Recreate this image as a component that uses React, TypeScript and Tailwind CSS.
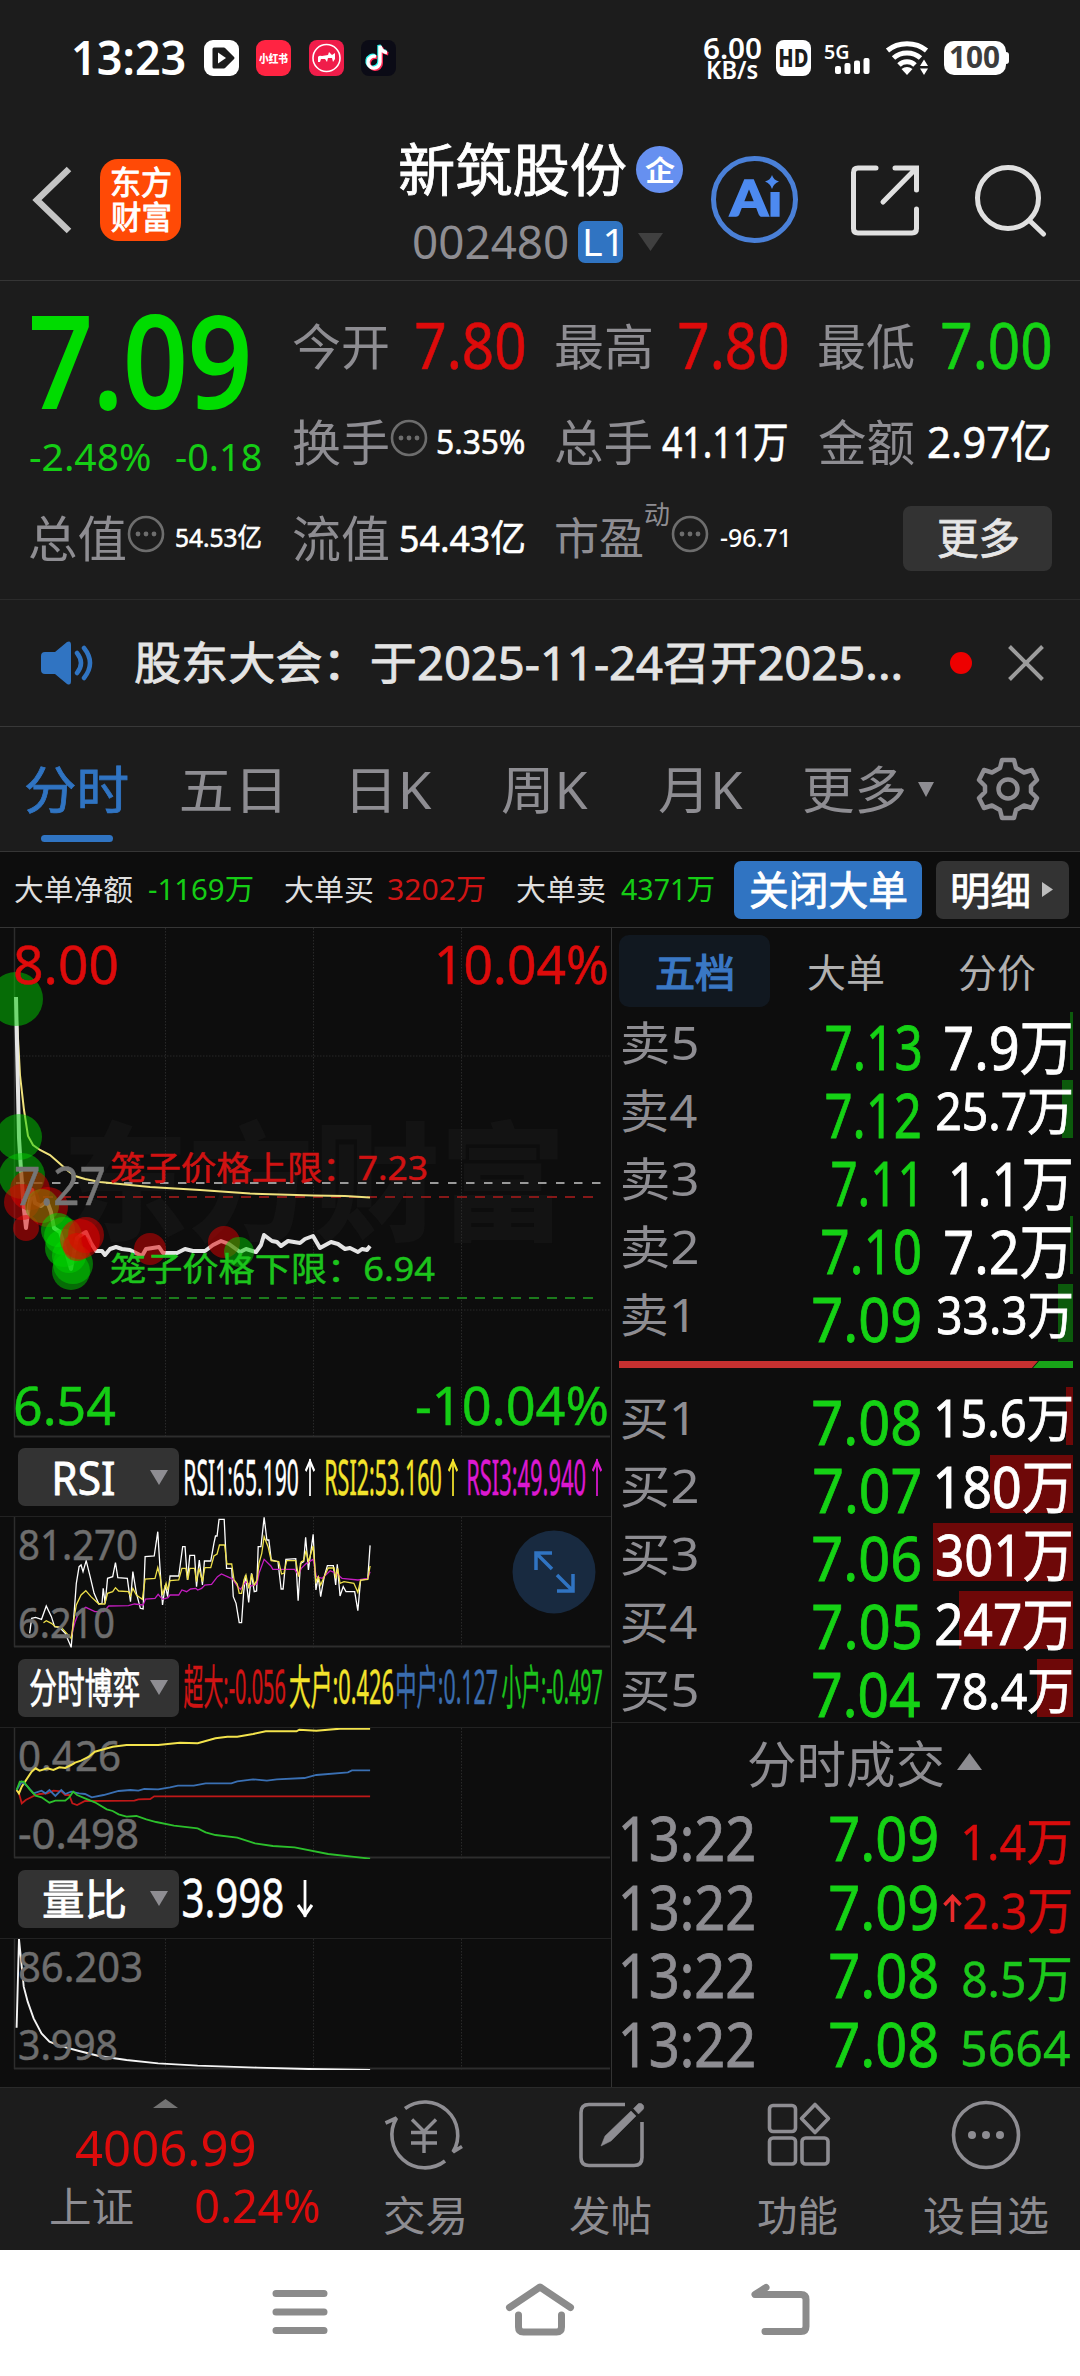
import { useLayoutEffect, useRef, type ReactNode } from "react";

/* Text squeezed or stretched so that its ink fills the width of its box. */
function Fit({ children, className = "" }: { children: string; className?: string }) {
  const box = useRef<HTMLSpanElement>(null);
  const ink = useRef<HTMLSpanElement>(null);
  useLayoutEffect(() => {
    if (!box.current || !ink.current) return;
    const cs = getComputedStyle(box.current);
    const ctx = document.createElement("canvas").getContext("2d");
    if (!ctx) return;
    ctx.font = `${cs.fontWeight} ${cs.fontSize} ${cs.fontFamily}`;
    const m = ctx.measureText(children);
    const width = m.actualBoundingBoxLeft + m.actualBoundingBoxRight;
    const k = box.current.offsetWidth / width;
    const lift = /\d/.test(children) ? -0.03 * parseFloat(cs.fontSize) : 0;
    ink.current.style.transform = `translate(${m.actualBoundingBoxLeft * k}px, ${lift}px) scaleX(${k})`;
  }, [children]);
  return (
    <span ref={box} className={`inline-block shrink-0 whitespace-nowrap leading-none ${className}`}>
      <span ref={ink} className="inline-block origin-left">
        {children}
      </span>
    </span>
  );
}

function StatusBar() {
  return (
    <div className="flex h-[116px] items-center pl-[74px] text-white">
      <Fit className="w-[111px] text-[46px] font-semibold">13:23</Fit>
      <svg className="ml-[19px] h-9 w-[35px]" viewBox="0 0 35 36">
        <rect width="35" height="36" rx="9" fill="#fff" />
        <path d="M10 9h10l9 9-9 9H10z" fill="#1c1c1c" stroke="#1c1c1c" strokeWidth="3" strokeLinejoin="round" />
        <path d="M14 12.500v11l8-5.500z" fill="#fff" />
      </svg>
      <div className="ml-[17px] flex h-9 w-[35px] items-center justify-center rounded-[9px] bg-[#ff2442]">
        <Fit className="w-[29px] text-[11px] font-black">小红书</Fit>
      </div>
      <svg className="ml-[18px] h-9 w-[35px]" viewBox="0 0 35 36">
        <rect width="35" height="36" rx="8" fill="#f01d4a" />
        <circle cx="17.500" cy="18" r="13.500" fill="none" stroke="#fff" strokeWidth="1.600" />
        <path d="M9 22v-5q1-2 4-1l6-1 1-3 3 3 3-2v6l-2 3-1-4h-4l-1 4-2-3h-4l-1 3z" fill="#fff" />
      </svg>
      <svg className="ml-[17px] h-9 w-[35px]" viewBox="0 0 35 36">
        <rect width="35" height="36" rx="8" fill="#0b0b16" />
        <g fill="none" strokeWidth="3.400">
          <path d="M15 16.500a6 6 0 1 0 4 5.600V6c1 4 3 6 7 6.500" stroke="#25f4ee" transform="translate(-1 -1)" />
          <path d="M15 16.500a6 6 0 1 0 4 5.600V6c1 4 3 6 7 6.500" stroke="#fe2c55" transform="translate(1.300 1.200)" />
          <path d="M15 16.500a6 6 0 1 0 4 5.600V6c1 4 3 6 7 6.500" stroke="#fff" />
        </g>
      </svg>
      <div className="ml-[308px] flex flex-col items-center">
        <Fit className="w-[57px] text-[28px] font-semibold">6.00</Fit>
        <Fit className="-mt-[6px] w-[50px] text-[25px] font-semibold">KB/s</Fit>
      </div>
      <div className="ml-[15px] flex h-9 w-[35px] items-center justify-center rounded-lg bg-white text-[#1c1c1c]">
        <Fit className="w-[28px] text-[24px] font-extrabold">HD</Fit>
      </div>
      <div className="ml-[14px] flex w-[45px] flex-col">
        <Fit className="h-4 w-[23px] text-[20px] font-semibold">5G</Fit>
        <svg className="-mt-[1px] ml-[9px] h-4 w-[37px]" viewBox="0 0 37 16" fill="#fff">
          <rect x="1" y="8" width="6" height="8" rx="2" />
          <rect x="10.500" y="5" width="6" height="11" rx="2" />
          <rect x="20" y="2.500" width="6" height="13.500" rx="2" />
          <rect x="29.500" y="0" width="6" height="16" rx="2" />
        </svg>
      </div>
      <svg className="ml-[15px] h-9 w-[46px]" viewBox="0 0 46 36" fill="none" stroke="#fff" strokeWidth="5">
        <path d="M2.500 10.500a28 24 0 0 1 39 0" />
        <path d="M8.500 18a19 17 0 0 1 27 0" />
        <path d="M14 25a11 10 0 0 1 16 0" />
        <path d="M16.500 29q5.500-4 11 0l-5.500 6z" fill="#fff" stroke="none" />
        <path d="M35 26l4-6.500 4 6.500zM35 28.500l4 6.500 4-6.500z" fill="#fff" stroke="none" />
      </svg>
      <div className="ml-[13px] flex h-[34px] w-[62px] items-center justify-center rounded-[10px] bg-white text-[#3c3c3c]">
        <Fit className="w-[50px] text-[30px] font-bold">100</Fit>
      </div>
      <div className="h-3 w-[3px] rounded-r bg-white" />
    </div>
  );
}

function Header() {
  return (
    <header className="flex h-[165px] items-center border-b border-[#353535] pt-[3px] pl-[32px]">
      <svg className="h-[68px] w-[40px]" viewBox="0 0 40 68" fill="none" stroke="#c4c4c4" strokeWidth="6.500">
        <path d="M37 3L5 34l32 31" />
      </svg>
      <div className="ml-[28px] flex h-[82px] w-[81px] flex-col items-center justify-center gap-[3px] rounded-[18px] bg-[#ff4a06] text-white">
        <Fit className="w-[58px] text-[32px] [-webkit-text-stroke:1px]">东方</Fit>
        <Fit className="w-[58px] text-[32px] [-webkit-text-stroke:1px]">财富</Fit>
      </div>
      <div className="ml-[219px] flex w-[283px] flex-col pt-[3px]">
        <div className="flex h-[60px] items-center">
          <Fit className="w-[226px] text-[57px] text-white [-webkit-text-stroke:0.8px]">新筑股份</Fit>
          <div className="ml-[10px] flex h-[47px] w-[47px] items-center justify-center rounded-full bg-[#6690f0] text-white">
            <Fit className="w-[30px] text-[28px] font-bold">企</Fit>
          </div>
        </div>
        <div className="mt-[21px] flex h-[42px] items-center pl-[14px]">
          <Fit className="w-[154px] text-[46px] text-[#8e8d92]">002480</Fit>
          <div className="ml-[10px] flex h-[42px] w-[45px] items-center justify-center rounded-[7px] bg-[#3074c2] text-white">
            <Fit className="w-[32px] text-[38px]">L1</Fit>
          </div>
          <svg className="ml-[14px] h-[18px] w-[27px]" viewBox="0 0 27 18">
            <path d="M1 0h25L13.500 18z" fill="#404040" />
          </svg>
        </div>
      </div>
      <div className="relative ml-[28px] flex h-[87px] w-[87px] items-center justify-center rounded-full border-[5px] border-[#4a80d8] text-[#4d8af0]">
        <Fit className="w-[51px] -translate-y-[3px] font-['Lato'] text-[50px] font-black [-webkit-text-stroke:1.5px]">Ai</Fit>
        <svg className="absolute top-[13px] left-[46px] h-[18px] w-[19px] bg-[#1c1c1c]" viewBox="0 0 19 18">
          <path d="M10 1q1.500 5 7 6.500-5.500 2-7 7.500-1.500-5.500-7-7.500Q8.500 6 10 1z" fill="#4d8af0" />
        </svg>
      </div>
      <svg className="ml-[50px] h-[72px] w-[74px]" viewBox="0 0 74 72" fill="none" stroke="#e0e0e0" strokeWidth="5" strokeLinecap="round">
        <path d="M28 4H10q-4.500 0-4.500 4.500v56q0 4.500 4.500 4.500h54q4.500 0 4.500-4.500V45" />
        <path d="M47 4h21.500v22M67 5.500L35 38" />
      </svg>
      <svg className="ml-[49px] h-[74px] w-[76px]" viewBox="0 0 76 74" fill="none" stroke="#e0e0e0" strokeWidth="5" strokeLinecap="round">
        <circle cx="37" cy="35" r="30.500" />
        <path d="M59 58l13.500 13" />
      </svg>
    </header>
  );
}

function Dots() {
  return (
    <svg className="mx-[2px] h-[38px] w-[38px] shrink-0 -translate-y-[4px]" viewBox="0 0 38 38">
      <circle cx="19" cy="19" r="17" fill="none" stroke="#6d6d6d" strokeWidth="2.600" />
      <g fill="#6d6d6d">
        <circle cx="11" cy="19" r="2.400" />
        <circle cx="19" cy="19" r="2.400" />
        <circle cx="27" cy="19" r="2.400" />
      </g>
    </svg>
  );
}

function Stat({ label, dots, children }: { label: string; dots?: boolean; children: ReactNode }) {
  return (
    <div className="flex items-center">
      <Fit className="w-[95px] text-[49px] text-[#8e8d92]">{label}</Fit>
      {dots && <Dots />}
      <span className="ml-auto flex [-webkit-text-stroke:0.6px]">{children}</span>
    </div>
  );
}

function Quote() {
  return (
    <section className="grid h-[319px] grid-cols-4 grid-rows-[96px_96px_96px] gap-x-8 border-b border-[#2b2b2b] px-[30px] pt-[17px]">
      <div className="row-span-2 flex flex-col">
        <Fit className="mt-[1px] ml-[2px] w-[215px] text-[127px] font-medium text-[#00dc00] [-webkit-text-stroke:2px]">7.09</Fit>
        <div className="mt-[11px] flex justify-between text-[#15cd15]">
          <Fit className="w-[120px] text-[39px]">-2.48%</Fit>
          <Fit className="w-[85px] text-[39px]">-0.18</Fit>
        </div>
      </div>
      <Stat label="今开"><Fit className="w-[108px] text-[63px] text-[#dd0b0b]">7.80</Fit></Stat>
      <Stat label="最高"><Fit className="w-[108px] text-[63px] text-[#dd0b0b]">7.80</Fit></Stat>
      <Stat label="最低"><Fit className="w-[108px] text-[63px] text-[#15d215]">7.00</Fit></Stat>
      <Stat label="换手" dots><Fit className="w-[86px] text-[33px] text-white">5.35%</Fit></Stat>
      <Stat label="总手"><Fit className="w-[125px] text-[43px] text-white">41.11万</Fit></Stat>
      <Stat label="金额"><Fit className="w-[121px] text-[44px] text-white">2.97亿</Fit></Stat>
      <Stat label="总值" dots><Fit className="w-[85px] text-[26px] text-white">54.53亿</Fit></Stat>
      <Stat label="流值"><Fit className="w-[123px] text-[37px] text-white">54.43亿</Fit></Stat>
      <div className="flex items-center">
        <Fit className="w-[87px] text-[44px] text-[#8e8d92]">市盈</Fit>
        <Fit className="ml-[2px] w-[24px] -translate-y-[24px] text-[26px] text-[#8e8d92]">动</Fit>
        <Dots />
        <Fit className="ml-auto w-[67px] text-[26px] font-medium text-white">-96.71</Fit>
      </div>
      <div className="-mr-[2px] flex items-center justify-end">
        <div className="flex h-[65px] w-[149px] items-center justify-center rounded-[8px] bg-[#333]">
          <Fit className="w-[80px] text-[42px] text-[#e6e6e6] [-webkit-text-stroke:0.8px]">更多</Fit>
        </div>
      </div>
    </section>
  );
}

function Notice() {
  return (
    <section className="flex h-[127px] items-center border-b border-[#383838] pl-[41px]">
      <svg className="h-[44px] w-[54px]" viewBox="0 0 54 44">
        <path d="M4 11h10L26 1q4-2 4 3v36q0 5-4 3L14 33H4q-4 0-4-4V15q0-4 4-4z" fill="#3074c2" />
        <path d="M36 12q8 10 0 20M43 7q12 15 0 30" fill="none" stroke="#3074c2" strokeWidth="4.500" strokeLinecap="round" />
      </svg>
      <Fit className="ml-[40px] w-[765px] text-[45px] text-[#e4e4e4] [-webkit-text-stroke:0.8px]">股东大会：于2025-11-24召开2025...</Fit>
      <div className="ml-[50px] h-[22px] w-[22px] rounded-full bg-[#ee0000]" />
      <svg className="ml-[36px] h-9 w-9" viewBox="0 0 36 36" stroke="#9c9c9c" strokeWidth="4">
        <path d="M1.500 1.500l33 33M34.500 1.500l-33 33" />
      </svg>
    </section>
  );
}

function Tabs() {
  return (
    <nav className="flex h-[125px] items-center border-b border-[#353535] pl-[26px] text-[51px] text-[#8e8d92]">
      <div className="relative flex h-full w-[102px] items-center">
        <Fit className="w-[102px] text-[#3074c2] [-webkit-text-stroke:0.8px]">分时</Fit>
        <div className="absolute bottom-[9px] left-[15px] h-[7px] w-[72px] rounded-full bg-[#3074c2]" />
      </div>
      <Fit className="ml-[53px] w-[99px]">五日</Fit>
      <Fit className="ml-[72px] w-[80px]">日K</Fit>
      <Fit className="ml-[70px] w-[86px]">周K</Fit>
      <Fit className="ml-[71px] w-[84px]">月K</Fit>
      <Fit className="ml-[61px] w-[101px]">更多</Fit>
      <svg className="ml-[13px] h-[15px] w-[16px]" viewBox="0 0 16 15">
        <path d="M0 0h16L8 15z" fill="#8e8d92" />
      </svg>
      <svg className="ml-[42px] h-[64px] w-[64px]" viewBox="0 0 64 64" fill="none" stroke="#8e8d92" strokeWidth="4.500">
        <path d="M26 3h12l2 8 8 4.500 8-2.500 5 10-6 6v6l6 6-5 10-8-2.500-8 4.500-2 8H26l-2-8-8-4.500L8 51 3 41l6-6v-6l-6-6 5-10 8 2.500 8-4.500z" strokeLinejoin="round" />
        <circle cx="32" cy="32" r="9.500" />
      </svg>
    </nav>
  );
}

function BigOrders() {
  return (
    <section className="flex h-[76px] items-center border-b border-[#353535] bg-[#0d0d0d] pl-[15px] text-[29px] text-[#dedede]">
      <Fit className="w-[118px]">大单净额</Fit>
      <Fit className="ml-[16px] w-[104px] text-[#15cd15]">-1169万</Fit>
      <Fit className="ml-[32px] w-[88px]">大单买</Fit>
      <Fit className="ml-[15px] w-[97px] text-[#d01414]">3202万</Fit>
      <Fit className="ml-[32px] w-[88px]">大单卖</Fit>
      <Fit className="ml-[16px] w-[93px] text-[#15cd15]">4371万</Fit>
      <div className="ml-[20px] flex h-[58px] w-[188px] items-center justify-center rounded-[7px] bg-[#3074c2]">
        <Fit className="w-[156px] text-[40px] text-white [-webkit-text-stroke:0.8px]">关闭大单</Fit>
      </div>
      <div className="ml-[14px] flex h-[58px] w-[133px] items-center rounded-[7px] bg-[#333] pl-[17px]">
        <Fit className="w-[76px] text-[39px] text-white [-webkit-text-stroke:0.8px]">明细</Fit>
        <svg className="ml-[13px] h-[15px] w-[11px]" viewBox="0 0 11 15">
          <path d="M0 0v15l11-7.500z" fill="#bdbdbd" />
        </svg>
      </div>
    </section>
  );
}

function Label({ x, y, w, size, fill, children }: { x: number; y: number; w: number; size: number; fill: string; children: string }) {
  return (
    <text x={x} y={y} fontSize={size} fill={fill} stroke={fill} strokeWidth="0.5" textLength={w} lengthAdjust="spacingAndGlyphs">
      {children}
    </text>
  );
}

function Frame({ h }: { h: number }) {
  return (
    <g fill="none" stroke="#2d2d2d">
      <path d={`M165.500 0V${h}M313.500 0V${h}M461.500 0V${h}`} strokeDasharray="1.500 1.500" stroke="#292929" />
      <path d={`M14.500 0V${h - 1}`} strokeWidth="1.500" />
      <path d={`M14 ${h - 1.500}H610`} strokeWidth="2" />
    </g>
  );
}

const bubbles: [number, number, number, string][] = [
  [16, 999, 27, "#00cc00"],
  [19, 1137, 23, "#00cc00"],
  [22, 1176, 23, "#00cc00"],
  [30, 1190, 20, "#e00000"],
  [22, 1202, 18, "#e00000"],
  [26, 1228, 13, "#e00000"],
  [48, 1207, 20, "#e00000"],
  [42, 1206, 17, "#6c9000"],
  [58, 1230, 17, "#00dd00"],
  [63, 1236, 19, "#00dd00"],
  [64, 1248, 19, "#00dd00"],
  [69, 1256, 17, "#00dd00"],
  [73, 1264, 20, "#00cc00"],
  [71, 1271, 19, "#00cc00"],
  [80, 1239, 20, "#e80000"],
  [86, 1235, 18, "#e80000"],
  [77, 1247, 14, "#e80000"],
  [150, 1249, 16, "#e00000"],
  [224, 1242, 16, "#e00000"],
  [239, 1252, 15, "#00cc00"],
];

function PriceChart() {
  return (
    <svg className="block h-[510px] w-[611px]" viewBox="0 928 611 510">
      <text x="62" y="1231" fontSize="128" fontWeight="900" fill="#131313" textLength="504" lengthAdjust="spacingAndGlyphs">
        东方财富
      </text>
      <g transform="translate(0 928)">
        <Frame h={510} />
      </g>
      <path d="M14 1056H610M14 1310H610" stroke="#292929" strokeDasharray="1.500 1.500" fill="none" />
      <path d="M16 1183H606" stroke="#999" strokeWidth="2" strokeDasharray="8.500 9.500" />
      <path d="M25 1197H594" stroke="#861818" strokeWidth="2" strokeDasharray="10 8" />
      <path d="M25 1298H594" stroke="#1c7a1c" strokeWidth="2" strokeDasharray="10 8" />
      <path
        d="M16 997L17 1020L20 1075L24 1110L28 1136L33 1145L40 1150L50 1155L58 1162L67 1170L75 1176L85 1179L100 1182L150 1187L200 1190L250 1193.500L313 1195.500L345 1196L370 1197.500"
        fill="none"
        stroke="#f0e27c"
        strokeWidth="2"
      />
      <path
        d="M16 997L19 1138L21 1170L24 1210L26 1228L29 1205L32 1190L35 1203L41 1206L47 1201L51 1212L54 1228L60 1232L65 1248L71 1269L74 1252L77 1238L81 1235L86 1232L91 1243L96 1251L102 1251L105 1255L110 1249L116 1247L122 1249L130 1250L142 1256L146 1249L159 1247L163 1253L177 1253L185 1249L193 1251L205 1251L213 1245L221 1241L229 1244L240 1252L246 1249L256 1252L261 1245L264 1235L272 1241L277 1242L281 1246L288 1241L300 1243L305 1239L313 1236L320 1248L331 1242L338 1244L345 1249L350 1248L358 1252L362 1249L367 1250L370 1246"
        fill="none"
        stroke="#e4e4e4"
        strokeWidth="4"
        strokeLinejoin="round"
      />
      {bubbles.map(([cx, cy, r, fill], i) => (
        <circle key={i} cx={cx} cy={cy} r={r} fill={fill} fillOpacity="0.5" />
      ))}
      <Label x={13} y={984} w={106} size={53} fill="#dd0b0b">8.00</Label>
      <Label x={434} y={984} w={175} size={53} fill="#dd0b0b">10.04%</Label>
      <Label x={13} y={1425} w={103} size={53} fill="#15cd15">6.54</Label>
      <Label x={415} y={1425} w={194} size={53} fill="#15cd15">-10.04%</Label>
      <Label x={14} y={1205} w={92} size={53} fill="#757575">7.27</Label>
      <Label x={110} y={1180} w={318} size={33} fill="#d01212">笼子价格上限：7.23</Label>
      <Label x={110} y={1281} w={325} size={33} fill="#1cc41c">笼子价格下限：6.94</Label>
    </svg>
  );
}

function IndicatorHead({ h, pick, children }: { h: string; pick: ReactNode; children: ReactNode }) {
  return (
    <div className={`flex w-[611px] items-center pl-[18px] [-webkit-text-stroke:0.5px] ${h}`}>
      <div className="flex h-[58px] w-[161px] shrink-0 items-center rounded-[7px] bg-[#333] pr-[11px] text-white [-webkit-text-stroke:0.8px]">
        <div className="flex flex-1 justify-center">{pick}</div>
        <svg className="h-[15px] w-[18px]" viewBox="0 0 18 15">
          <path d="M0 0h18L9 15z" fill="#8e8d92" />
        </svg>
      </div>
      {children}
    </div>
  );
}

const rsi1 =
  "75,610 80,565 90,562 105,568 117,528 130,560 138,590 150,592 165,610 180,652 188,540 193,460 200,410 205,405 210,425 218,392 228,440 238,490 250,522 258,520 261,475 266,520 272,445 285,440 292,398 298,443 322,445 330,515 336,425 345,490 355,535 362,537 367,380 390,378 399,305 405,420 411,525 418,465 424,500 430,438 452,438 462,350 468,350 474,450 480,376 492,376 497,470 504,390 512,465 517,393 533,393 541,340 545,318 549,318 554,268 567,268 573,415 586,415 590,500 597,520 605,578 611,578 616,490 621,435 629,517 636,430 643,485 649,483 653,350 660,350 668,262 675,330 680,330 686,390 703,395 711,477 716,477 723,388 748,386 754,512 760,400 768,395 773,322 780,420 792,313 799,480 805,440 811,500 820,440 828,407 843,407 849,465 853,403 860,498 868,470 875,485 897,485 905,542 912,450 930,447 936,346";
const rsi2 =
  "110,578 117,572 130,580 140,590 155,592 180,625 188,560 193,525 205,495 217,482 230,500 250,522 265,522 272,490 285,485 292,473 300,483 325,485 330,498 336,475 345,495 360,508 367,447 392,445 399,413 405,440 411,495 420,460 424,480 430,452 452,450 460,415 470,415 475,450 480,415 492,415 497,455 503,415 512,455 518,413 533,413 541,378 549,372 555,345 568,345 574,402 586,402 592,450 600,462 605,490 611,490 617,450 622,435 629,475 637,432 643,465 650,450 655,400 662,370 668,320 678,350 686,392 705,395 712,432 718,430 725,392 748,392 755,440 762,395 768,392 774,362 780,395 792,348 799,455 805,440 811,465 820,440 830,414 845,414 849,445 854,415 860,460 870,455 895,460 905,487 912,450 930,448 936,408";
const rsi3 =
  "180,620 190,575 200,545 217,532 240,545 262,545 275,528 325,527 340,522 362,525 368,507 392,505 400,493 405,500 411,508 425,503 430,495 452,495 460,480 472,485 482,477 495,475 500,480 510,475 518,465 535,463 550,440 560,432 575,440 588,447 600,468 608,478 622,455 635,468 650,462 655,430 668,388 685,408 690,418 745,418 755,435 762,415 775,400 792,388 800,440 815,445 835,422 850,430 865,445 905,450 930,445 936,425";

const superLarge = "42,120 48,130 55,160 65,150 85,138 100,132 120,130 135,122 155,124 165,135 175,135 183,160 195,165 215,153 340,152 350,148 380,147 390,139 936,139";
const large =
  "42,120 48,130 55,110 80,65 90,55 100,62 120,55 135,60 150,52 165,54 180,45 190,38 205,32 225,20 240,5 262,-2 285,-10 320,-15 400,-15 455,-22 500,-20 545,-35 575,-40 600,-40 640,-48 672,-56 750,-56 757,-61 800,-58 860,-64 936,-64";
const medium =
  "42,120 55,95 70,110 85,130 105,122 115,130 125,120 140,138 155,120 165,132 180,125 200,130 215,132 232,142 262,135 300,123 330,120 350,122 365,117 400,118 430,112 450,107 490,107 520,100 585,100 600,94 640,88 675,92 700,88 770,84 800,75 880,67 890,61 936,61";
const small =
  "42,120 50,95 60,95 75,118 90,137 105,142 115,150 125,158 140,152 165,152 175,142 185,125 195,135 215,145 240,157 270,178 285,183 300,193 320,200 345,198 370,208 395,216 440,227 500,235 520,247 545,255 600,263 645,280 690,288 745,292 830,312 890,320 936,326";
const volumeRatio =
  "42,833 48,567 55,650 60,710 70,755 85,805 105,850 125,875 150,887 200,903 250,918 320,930 400,940 500,947 650,953 780,957 936,960";

function Line({ points, color, width = 1.3 }: { points: string; color: string; width?: number }) {
  return <polyline points={points} fill="none" stroke={color} strokeWidth={width} vectorEffect="non-scaling-stroke" />;
}

function Arrow({ color, className, wide }: { color: string; className: string; wide?: boolean }) {
  return (
    <svg className={`h-[38px] shrink-0 ${wide ? "w-[16px]" : "w-[10px]"} ${className}`} viewBox="0 0 16 38" preserveAspectRatio="none" fill="none" stroke={color}>
      <path d="M8 1v37" strokeWidth="2.800" />
      <path d="M1 13l7-10 7 10" strokeWidth="3.200" />
    </svg>
  );
}

function Charts() {
  return (
    <div className="flex w-[612px] shrink-0 flex-col border-r border-[#333]">
      <PriceChart />
      <IndicatorHead h="h-[78px]" pick={<Fit className="w-[59px] text-[46px]">RSI</Fit>}>
        <Fit className="ml-[6px] w-[113px] text-[49px] text-white">RSI1:65.190</Fit>
        <Arrow color="#fff" className="ml-[7px]" />
        <Fit className="ml-[11px] w-[115px] text-[49px] text-[#f3e32c]">RSI2:53.160</Fit>
        <Arrow color="#f3e32c" className="ml-[7px]" />
        <Fit className="ml-[10px] w-[117px] text-[49px] text-[#dc18d0]">RSI3:49.940</Fit>
        <Arrow color="#dc18d0" className="ml-[7px]" />
      </IndicatorHead>
      <div className="relative h-[132px] border-t border-[#222]">
        <svg className="block h-[131px] w-[611px]" viewBox="0 0 611 131">
          <Frame h={131} />
          <g transform="matrix(.3954 0 0 .33333 0 -87)">
            <Line points={rsi1} color="#fff" />
            <Line points={rsi3} color="#c41cc0" />
            <Line points={rsi2} color="#eee04a" />
          </g>
          <Label x={18} y={43} w={120} size={42} fill="#6e6e6e">81.270</Label>
          <Label x={18} y={121} w={97} size={42} fill="#6e6e6e">6.210</Label>
        </svg>
        <svg className="absolute top-[13px] left-[512px] h-[84px] w-[84px]" viewBox="0 0 84 84">
          <circle cx="42" cy="42" r="41.500" fill="#182a40" />
          <path d="M40 23H24v17M24 23l16 16M45 45l16 16M61 44v17H45" fill="none" stroke="#3074c2" strokeWidth="3.500" />
        </svg>
      </div>
      <IndicatorHead h="h-[79px]" pick={<Fit className="w-[109px] text-[41px]">分时博弈</Fit>}>
        <Fit className="ml-[5px] w-[101px] text-[47px] text-[#d01414]">超大:-0.056</Fit>
        <Fit className="ml-[5px] w-[103px] text-[47px] text-[#f3e32c]">大户:0.426</Fit>
        <Fit className="ml-[4px] w-[100px] text-[47px] text-[#3a6cae]">中户:0.127</Fit>
        <Fit className="ml-[5px] w-[100px] text-[47px] text-[#1cc41c]">小户:-0.497</Fit>
      </IndicatorHead>
      <div className="h-[132px] border-t border-[#222]">
        <svg className="block h-[131px] w-[611px]" viewBox="0 0 611 131">
          <Frame h={131} />
          <Label x={18} y={43} w={103} size={42} fill="#6e6e6e">0.426</Label>
          <Label x={18} y={121} w={121} size={42} fill="#6e6e6e">-0.498</Label>
          <g transform="matrix(.3954 0 0 .33333 0 22)">
            <Line points={superLarge} color="#c01818" width={1.8} />
            <Line points={large} color="#f3e34c" width={2} />
            <Line points={medium} color="#3a70b4" width={1.8} />
            <Line points={small} color="#2cc02c" width={1.8} />
          </g>
        </svg>
      </div>
      <IndicatorHead h="h-[79px]" pick={<Fit className="w-[82px] text-[42px]">量比</Fit>}>
        <Fit className="ml-[4px] w-[100px] text-[52px] text-white">3.998</Fit>
        <Arrow color="#fff" className="ml-[14px] rotate-180" wide />
      </IndicatorHead>
      <div className="h-[132px] border-t border-[#222]">
        <svg className="block h-[131px] w-[611px]" viewBox="0 0 611 131">
          <Frame h={131} />
          <g transform="matrix(.3954 0 0 .33333 0 -189)">
            <Line points={volumeRatio} color="#f4f4f4" width={1.9} />
          </g>
          <Label x={18} y={43} w={125} size={42} fill="#6e6e6e">86.203</Label>
          <Label x={18} y={121} w={100} size={42} fill="#6e6e6e">3.998</Label>
        </svg>
      </div>
    </div>
  );
}

type Level = { name: string; price: string; priceW: string; qty: string; qtyCls: string; bar: string };

const sells: Level[] = [
  { name: "卖5", price: "7.13", priceW: "w-[94px]", qty: "7.9万", qtyCls: "w-[126px] text-[60px] mt-[16px]", bar: "w-[3px]" },
  { name: "卖4", price: "7.12", priceW: "w-[94px]", qty: "25.7万", qtyCls: "w-[134px] text-[51px] mt-[6px]", bar: "w-[11px]" },
  { name: "卖3", price: "7.11", priceW: "w-[83px] mr-[5px]", qty: "1.1万", qtyCls: "w-[119px] text-[60px] mt-[16px]", bar: "w-0" },
  { name: "卖2", price: "7.10", priceW: "w-[98px]", qty: "7.2万", qtyCls: "w-[126px] text-[60px] mt-[16px]", bar: "w-[3px]" },
  { name: "卖1", price: "7.09", priceW: "w-[107px]", qty: "33.3万", qtyCls: "w-[133px] text-[51px] mt-[6px]", bar: "w-[15px]" },
];

const buys: Level[] = [
  { name: "买1", price: "7.08", priceW: "w-[107px]", qty: "15.6万", qtyCls: "w-[134px] text-[51px] mt-[6px]", bar: "w-[7px]" },
  { name: "买2", price: "7.07", priceW: "w-[106px]", qty: "180万", qtyCls: "w-[134px] text-[57px] mt-[9px]", bar: "w-[83px]" },
  { name: "买3", price: "7.06", priceW: "w-[107px]", qty: "301万", qtyCls: "w-[134px] text-[57px] mt-[9px]", bar: "w-[140px]" },
  { name: "买4", price: "7.05", priceW: "w-[107px]", qty: "247万", qtyCls: "w-[135px] text-[56px] mt-[9px]", bar: "w-[114px]" },
  { name: "买5", price: "7.04", priceW: "w-[107px]", qty: "78.4万", qtyCls: "w-[134px] text-[50px] mt-[6px]", bar: "w-[36px]" },
];

function LevelRow({ level, side }: { level: Level; side: "sell" | "buy" }) {
  return (
    <div className="relative mb-[10px] flex h-[58px] items-center pr-[9px] pl-[10px] [-webkit-text-stroke:0.8px]">
      <div className={`absolute top-0 right-[7px] h-full ${level.bar} ${side === "sell" ? "bg-[#0c5a0c]" : "bg-[#6e0808]"}`} />
      <Fit className={`mt-[4px] text-[46px] text-[#8e8d92] [-webkit-text-stroke:0px] ${level.name.endsWith("1") ? "w-[65px]" : "w-[75px]"}`}>{level.name}</Fit>
      <div className="ml-auto flex justify-end pt-[14px]">
        <Fit className={`text-[62px] text-[#15d215] ${level.priceW}`}>{level.price}</Fit>
      </div>
      <div className="relative ml-[7px] flex w-[144px] justify-end">
        <Fit className={`text-white ${level.qtyCls}`}>{level.qty}</Fit>
      </div>
    </div>
  );
}

const trades = [
  { price: "7.09", qty: "1.4万", up: false, color: "text-[#d80c0c]", w: "w-[106px]" },
  { price: "7.09", qty: "2.3万", up: true, color: "text-[#d80c0c]", w: "w-[106px]" },
  { price: "7.08", qty: "8.5万", up: false, color: "text-[#1cc81c]", w: "w-[107px]" },
  { price: "7.08", qty: "5664", up: false, color: "text-[#1cc81c]", w: "w-[107px]" },
];

function OrderBook() {
  return (
    <div className="flex w-[468px] flex-col">
      <div className="flex h-[84px] items-start pt-[7px] pl-[7px]">
        <div className="flex h-[72px] w-[151px] items-center justify-center rounded-[10px] bg-[#111820]">
          <Fit className="w-[76px] text-[39px] text-[#3a78c4] [-webkit-text-stroke:1.3px]">五档</Fit>
        </div>
        <div className="flex h-[72px] w-[151px] items-center justify-center">
          <Fit className="w-[75px] text-[39px] text-[#b0b0b0]">大单</Fit>
        </div>
        <div className="flex h-[72px] w-[151px] items-center justify-center">
          <Fit className="w-[76px] text-[39px] text-[#b0b0b0]">分价</Fit>
        </div>
      </div>
      {sells.map((l) => <LevelRow key={l.name} level={l} side="sell" />)}
      <svg className="mt-[9px] mb-[19px] ml-[7px] h-[7px] w-[454px]" viewBox="0 0 454 7">
        <path d="M0 0h419l-6 7H0z" fill="#c53030" />
        <path d="M420 0h34v7h-40z" fill="#18a418" />
      </svg>
      {buys.map((l) => <LevelRow key={l.name} level={l} side="buy" />)}
      <div className="-mt-[5px] flex h-[83px] items-center border-t border-[#242424] pl-[137px]">
        <Fit className="w-[194px] text-[50px] text-[#8e8d92]">分时成交</Fit>
        <svg className="ml-[14px] h-[17px] w-[25px] -translate-y-[3px]" viewBox="0 0 25 17">
          <path d="M12.500 0L25 17H0z" fill="#8e8d92" />
        </svg>
      </div>
      {trades.map((t, i) => (
        <div key={i} className="flex h-[68.5px] items-center pr-[10px] pl-[10px] [-webkit-text-stroke:0.8px]">
          <Fit className="w-[132px] text-[62px] text-[#8e8d92]">13:22</Fit>
          <Fit className="ml-[76px] w-[107px] text-[62px] text-[#15d215]">{t.price}</Fit>
          <div className="ml-[6px] w-[19px]">
            {t.up && (
              <svg className="h-[28px] w-[19px]" viewBox="0 0 19 28" fill="none" stroke="#e82c2c" strokeWidth="3.600">
                <path d="M9.500 3v25M1.500 11l8-8.500 8 8.500" />
              </svg>
            )}
          </div>
          <Fit className={`mt-[6px] ml-auto text-[50px] [-webkit-text-stroke:0.4px] ${t.color} ${t.w}`}>{t.qty}</Fit>
        </div>
      ))}
    </div>
  );
}

function Action({ icon, children }: { icon: ReactNode; children: ReactNode }) {
  return (
    <div className="flex flex-col items-center pt-[10px] text-[41px] text-[#8e8d92]">
      <svg className="h-[76px] w-[84px]" viewBox="0 0 84 76" fill="none" stroke="#8e8d92" strokeWidth="3.600">
        {icon}
      </svg>
      <div className="mt-[21px] flex">{children}</div>
    </div>
  );
}

function BottomBar() {
  return (
    <footer className="flex h-[163px] border-t border-[#2a2a2a] bg-[#1c1c1c]">
      <div className="flex w-[330px] flex-col text-[#dd0b0b]">
        <svg className="mt-[11px] ml-[153px] h-[9px] w-[25px]" viewBox="0 0 25 9">
          <path d="M12.500 0L25 9H0z" fill="#737373" />
        </svg>
        <Fit className="mt-[15px] ml-[76px] w-[178px] text-[50px]">4006.99</Fit>
        <div className="mt-[10px] flex items-center">
          <Fit className="ml-[51px] w-[82px] text-[41px] text-[#8e8d92]">上证</Fit>
          <Fit className="ml-[63px] w-[122px] text-[46px]">0.24%</Fit>
        </div>
      </div>
      <div className="-mr-[1px] grid flex-1 grid-cols-[187px_187px_187px_189px]">
        <Action
          icon={
            <>
              <path d="M23 10.500A33 33 0 0 1 71 54l9-5.500" strokeLinejoin="bevel" />
              <path d="M63 63A33 33 0 0 1 14.500 20L3.500 25" strokeLinejoin="bevel" />
              <path d="M30 21.500l12 12 12-12M42 33v22M29 34.500h26M29 45h26" strokeWidth="3.400" />
            </>
          }
        >
          <Fit className="w-[80px]">交易</Fit>
        </Action>
        <Action
          icon={
            <>
              <path d="M56 6.500H20q-8 0-8 8v45q0 8 8 8h45q8 0 8-8V24" />
              <path d="M32 48l4-10 26-25 5 5-25 25zM64.500 10.500l5-5q3-1 5 2 1 3-1 4.500l-4 4z" fill="#8e8d92" strokeWidth="0.500" />
            </>
          }
        >
          <Fit className="w-[81px]">发帖</Fit>
        </Action>
        <Action
          icon={
            <>
              <rect x="13.500" y="7.500" width="26" height="26" rx="3.500" />
              <rect x="13.500" y="40" width="26" height="26" rx="3.500" />
              <rect x="46" y="40" width="26" height="26" rx="3.500" />
              <path d="M59 6.500l13.500 14L59 34.500l-13.500-14z" strokeLinejoin="round" />
            </>
          }
        >
          <Fit className="w-[79px]">功能</Fit>
        </Action>
        <Action
          icon={
            <>
              <circle cx="42" cy="37" r="32.500" />
              <g fill="#8e8d92" stroke="none">
                <circle cx="28" cy="37" r="4" />
                <circle cx="42" cy="37" r="4" />
                <circle cx="56" cy="37" r="4" />
              </g>
            </>
          }
        >
          <Fit className="w-[124px]">设自选</Fit>
        </Action>
      </div>
    </footer>
  );
}

function SystemNav() {
  return (
    <div className="flex h-[126px] items-start bg-white pt-[32px] pl-[272px]">
      <svg className="h-[54px] w-[56px]" viewBox="0 0 56 54" stroke="#8b8b8b" strokeWidth="7" strokeLinecap="round">
        <path d="M4 11.500h48M4 30h48M4 48.500h48" />
      </svg>
      <svg className="ml-[176px] h-[54px] w-[72px]" viewBox="0 0 72 54" fill="none" stroke="#8b8b8b" strokeWidth="7" strokeLinecap="round" strokeLinejoin="round">
        <path d="M5.500 25.500L36 5l30.500 20.500" />
        <path d="M14.500 33v12q0 5 5 5h33q5 0 5-5V33" />
      </svg>
      <svg className="ml-[174px] h-[54px] w-[62px]" viewBox="0 0 62 54" fill="none" stroke="#8b8b8b" strokeWidth="7" strokeLinecap="round" strokeLinejoin="round">
        <path d="M16 5.500L5 12.500h46q5 0 5 5v27q0 5-5 5H15" />
      </svg>
    </div>
  );
}

export default function App() {
  return (
    <div className="w-[1080px] overflow-hidden bg-[#1c1c1c] font-['Noto_Sans','Noto_Sans_CJK_SC',sans-serif]">
      <StatusBar />
      <Header />
      <Quote />
      <Notice />
      <Tabs />
      <BigOrders />
      <main className="flex h-[1159px] bg-[#0d0d0d]">
        <Charts />
        <OrderBook />
      </main>
      <BottomBar />
      <SystemNav />
    </div>
  );
}
